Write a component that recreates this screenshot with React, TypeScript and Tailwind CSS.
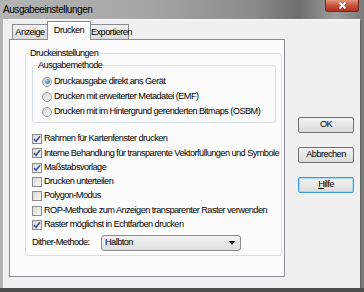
import React from 'react';

const font = { fontFamily: '"Liberation Sans", Arial, sans-serif' };

const Radio: React.FC<{ checked?: boolean; label: string }> = ({ checked, label }) => (
    <div className="flex items-center h-[15px]">
        <span className="w-[10px] h-[10px] shrink-0 rounded-full border border-[#9a9a9a] bg-gradient-to-br from-[#d8d8d8] to-[#f8f8f8] flex items-center justify-center mr-[2px]">
            {checked && <span className="w-[5px] h-[5px] rounded-full bg-[radial-gradient(circle_at_35%_35%,#9ad8f8,#1a5fa8)]" />}
        </span>
        <span className="whitespace-nowrap">{label}</span>
    </div>
);

const Check: React.FC<{ checked?: boolean; label: string }> = ({ checked, label }) => (
    <div className="flex items-center h-[14.3px]">
        <span className="w-[10px] h-[10px] shrink-0 border border-[#8f8f8f] bg-gradient-to-br from-[#d8d8d8] to-[#fafafa] flex items-center justify-center mr-[2px]">
            {checked && (
                <svg width="8" height="8" viewBox="0 0 8 8">
                    <path d="M1 4 L3 6.3 L7 1.2" stroke="#3a4da0" strokeWidth="1.5" fill="none" />
                </svg>
            )}
        </span>
        <span className="whitespace-nowrap">{label}</span>
    </div>
);

const Button: React.FC<{ children: React.ReactNode; focused?: boolean }> = ({ children, focused }) => (
    <div
        className={`w-[56px] h-[16px] rounded-[2px] border flex items-center justify-center bg-gradient-to-b from-[#f3f3f3] to-[#dcdcdc] ${focused ? 'border-[#3c9bd8] shadow-[inset_0_0_0_1px_#a6dcf6]' : 'border-[#707070]'}`}
    >
        {children}
    </div>
);

export default function App() {
    return (
        <div className="w-[364px] h-[292px] bg-[linear-gradient(90deg,#b4b4b4_0%,#a6a6a6_40%,#8a8a8a_70%,#6e6e6e_82%,#9c9c9c_92%,#7a7a7a_100%)] text-[9.2px] tracking-[-0.55px] text-black overflow-hidden flex flex-col" style={font}>
            <div className="h-[19px] flex items-start justify-between pl-[3px]">
                <span className="text-[10px] tracking-[-0.45px] leading-[19px] whitespace-nowrap">Ausgabeeinstellungen</span>
                <div className="w-[34px] h-[12px] mr-[5px] rounded-b-[3px] border border-t-0 border-[#6a2a1e] bg-gradient-to-b from-[#e6947c] via-[#c8553a] to-[#b0301c] flex items-center justify-center">
                    <svg width="9" height="7" viewBox="0 0 9 7">
                        <path d="M1.5 0.5 L7.5 6.5 M7.5 0.5 L1.5 6.5" stroke="#fff" strokeWidth="1.8" />
                    </svg>
                </div>
            </div>
            <div className="h-[269px] mx-[3px] bg-[#f0f0f0] border-t border-t-[#fafafa] border-r border-r-[#5e5e5e] flex">
                <div className="ml-[6px] w-[276px] pt-[1px] flex flex-col">
                    <div className="flex h-[18px] pl-[3px] items-end">
                        <div className="w-[36px] h-[15px] border border-b-0 border-[#898c95] bg-gradient-to-b from-[#f2f2f2] to-[#dadada] leading-[14px] text-center">Anzeige</div>
                        <div className="w-[44px] h-[19px] -mb-px -ml-px border border-b-0 border-[#898c95] bg-[#fcfcfc] leading-[17px] text-center relative z-10">Drucken</div>
                        <div className="w-[39px] h-[15px] -ml-px border border-b-0 border-[#898c95] bg-gradient-to-b from-[#f2f2f2] to-[#dadada] leading-[14px] text-center">Exportieren</div>
                    </div>
                    <div className="h-[238px] border border-[#898c95] bg-[#fcfcfc] pl-[15px] pr-[2px] pt-[13px]">
                        <div className="relative border border-[#d5dfe5] rounded-[3px] h-[203px] pl-[6px] pr-[5px] pt-[11px]">
                            <span className="absolute -top-[7px] left-[3px] bg-[#fcfcfc] px-[1px] leading-[13px] whitespace-nowrap">Druckeinstellungen</span>
                            <div className="relative border border-[#d5dfe5] rounded-[3px] h-[58px] pl-[9px] pt-[8px]">
                                <span className="absolute -top-[7px] left-[4px] bg-[#fcfcfc] px-[1px] leading-[13px] whitespace-nowrap">Ausgabemethode</span>
                                <Radio checked label="Druckausgabe direkt ans Gerät" />
                                <Radio label="Drucken mit erweiterter Metadatei (EMF)" />
                                <Radio label="Drucken mit im Hintergrund gerenderten Bitmaps (OSBM)" />
                            </div>
                            <div className="mt-[9px] flex flex-col">
                                <Check checked label="Rahmen für Kartenfenster drucken" />
                                <Check checked label="Interne Behandlung für transparente Vektorfüllungen und Symbole" />
                                <Check checked label="Maßstabsvorlage" />
                                <Check label="Drucken unterteilen" />
                                <Check label="Polygon-Modus" />
                                <Check label="ROP-Methode zum Anzeigen transparenter Raster verwenden" />
                                <Check checked label="Raster möglichst in Echtfarben drucken" />
                            </div>
                            <div className="flex items-center mt-[3px]">
                                <span className="w-[69px] whitespace-nowrap">Dither-Methode:</span>
                                <div className="w-[140px] h-[16px] border border-[#8a8a8a] rounded-[3px] bg-gradient-to-b from-[#f4f4f4] to-[#dedede] flex items-center justify-between pl-[3px] pr-[5px]">
                                    <span>Halbton</span>
                                    <svg width="6" height="4" viewBox="0 0 6 4"><path d="M0 0 H6 L3 4 Z" fill="#000" /></svg>
                                </div>
                            </div>
                        </div>
                    </div>
                </div>
                <div className="ml-[13px] flex flex-col pt-[97px] gap-[14px]">
                    <Button>OK</Button>
                    <Button>Abbrechen</Button>
                    <Button focused><span><u>H</u>ilfe</span></Button>
                </div>
            </div>
            <div className="flex-1 bg-[#4c4c4c]" />
        </div>
    );
}
